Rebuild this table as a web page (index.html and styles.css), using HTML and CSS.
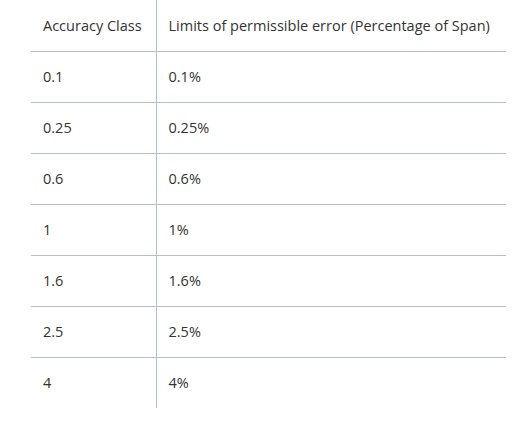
FILE: index.html
```html
<!DOCTYPE html>
<html>
<head>
<meta charset="utf-8">
<link rel="stylesheet" href="styles.css">
</head>
<body>
<table class="acc">
  <thead>
    <tr><th class="c1">Accuracy Class</th><th class="c2">Limits of permissible error (Percentage of Span)</th></tr>
  </thead>
  <tbody>
    <tr><td class="c1">0.1</td><td class="c2">0.1%</td></tr>
    <tr><td class="c1">0.25</td><td class="c2">0.25%</td></tr>
    <tr><td class="c1">0.6</td><td class="c2">0.6%</td></tr>
    <tr><td class="c1">1</td><td class="c2">1%</td></tr>
    <tr><td class="c1">1.6</td><td class="c2">1.6%</td></tr>
    <tr><td class="c1">2.5</td><td class="c2">2.5%</td></tr>
    <tr><td class="c1">4</td><td class="c2">4%</td></tr>
  </tbody>
</table>
</body>
</html>
```
FILE: styles.css
```css
html, body { margin: 0; padding: 0; background: #fff; }
body { padding: 0 0 0 31px; }
.acc {
  border-collapse: collapse;
  width: 475px;
  font-family: "Open Sans", "Noto Sans", sans-serif;
  font-size: 14.5px;
  color: #333;
  table-layout: fixed;
}
.acc th, .acc td {
  height: 51px;
  padding: 0 12px;
  text-align: left;
  font-weight: normal;
  vertical-align: middle;
  border-bottom: 1px solid #b4bfcb;
  box-sizing: border-box;
}
.acc tbody tr:last-child td { border-bottom: none; }
.acc .c1 { width: 125px; border-right: 1px solid #b4bfcb; }
.acc .c2 { padding-left: 12px; }
```
